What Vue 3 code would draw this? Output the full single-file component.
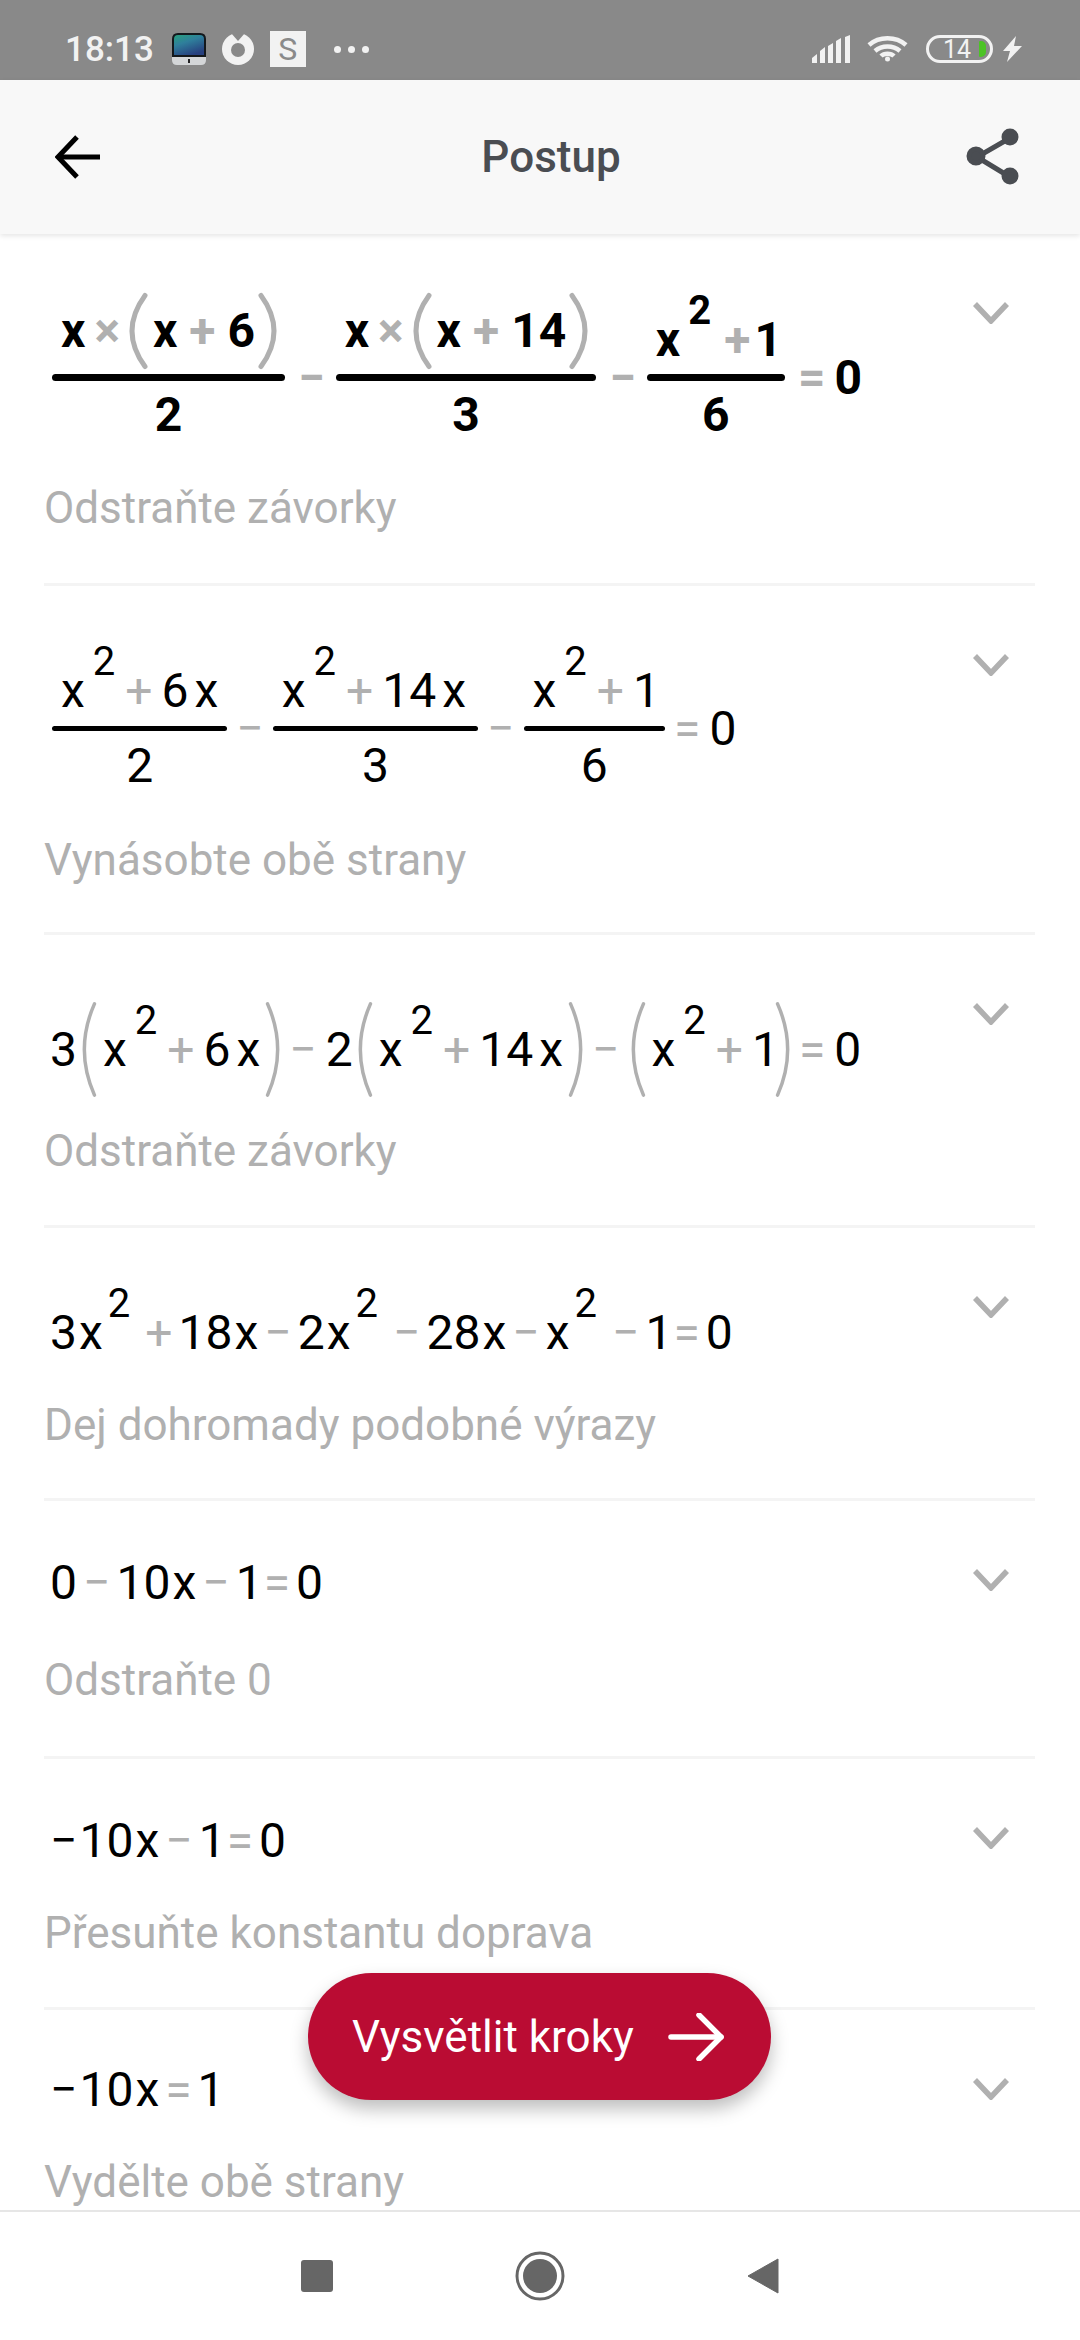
<template>
  <div class="page">
    <div class="status">
      <div class="side">
        <span class="time">18:13</span>
        <svg class="imac" width="34" height="32" viewBox="0 0 34 32">
          <defs>
            <linearGradient id="scr" x1="0" y1="0" x2="0.5" y2="1">
              <stop offset="0" stop-color="#27a37a" />
              <stop offset="0.45" stop-color="#2f7f9c" />
              <stop offset="1" stop-color="#27407f" />
            </linearGradient>
          </defs>
          <path d="M1 23V6q0-5 5-5h22q5 0 5 5v17z" fill="url(#scr)" stroke="#14181c" stroke-width="2" />
          <path d="M0 24h34v3q0 5-5 5H5q-5 0-5-5z" fill="#d4d6d8" />
          <rect x="16" y="26" width="2" height="4" fill="#222" />
        </svg>
        <svg class="logo" width="32" height="32" viewBox="0 0 32 32">
          <circle cx="16" cy="16" r="16" fill="#f2f2f2" />
          <path d="M9 0L16 8L23 0z" fill="#898989" />
          <circle cx="16" cy="17" r="7" fill="#898989" />
        </svg>
        <span class="sq">S</span>
        <span class="dots"><i></i><i></i><i></i></span>
      </div>
      <div class="side">
        <svg width="39" height="28" viewBox="0 0 39 28" fill="#f2f2f2">
          <path d="M0 23l5-4v9H0zM8 16l5-4v16H8zM16 11l5-3v20h-5zM24 6l5-3v25h-5zM33 2l5-2v28h-5z" />
        </svg>
        <svg class="wifi" width="41" height="26" viewBox="0 0 41 26" fill="none" stroke="#f2f2f2" stroke-width="4.5">
          <path d="M2 9C12 0 29 0 39 9" />
          <path d="M8 15C15 9 26 9 33 15" />
          <path d="M14 20C17 17 24 17 27 20" />
          <circle cx="20.5" cy="23" r="2.5" fill="#f2f2f2" stroke="none" />
        </svg>
        <div class="batt">
          <span>14</span>
          <i></i>
        </div>
        <svg class="bolt" width="19" height="26" viewBox="0 0 19 26" fill="#f2f2f2">
          <path d="M13 0L0 15h7L4 26L19 10h-8z" />
        </svg>
      </div>
    </div>

    <header class="head">
      <svg width="45" height="44" viewBox="0 0 45 44" fill="none" stroke="#000" stroke-width="5">
        <path d="M45 22H4" />
        <path d="M22 2L3 22L22 42" />
      </svg>
      <h1 class="title">Postup</h1>
      <svg width="54" height="58" viewBox="0 0 54 58" fill="#4a4d52" stroke="#4a4d52" stroke-width="5">
        <path d="M44 10L11 29L44 49" fill="none" />
        <circle cx="44" cy="9" r="6" />
        <circle cx="10" cy="28" r="7" />
        <circle cx="44" cy="48" r="6" />
      </svg>
    </header>

    <main class="list">
      <section v-for="(s, i) in steps" :key="i" class="step" :class="{ bold: s.bold, tight: s.tight }" :style="{ paddingBottom: s.pad[2] + 'px' }">
        <div class="body">
          <div class="math" :style="{ marginTop: s.pad[0] + 'px', marginBottom: s.pad[1] + 'px' }">
            <div v-for="(it, j) in s.items" :key="j" :class="it.den ? 'frac' : 'run'">
              <div class="num">
                <template v-for="(t, k) in it.toks" :key="k">
                  <svg v-if="t.paren" class="paren" :class="{ shut: t.shut, tall: s.tall }" viewBox="0 0 18 100" preserveAspectRatio="none">
                    <path d="M16 2Q-10 50 16 98" fill="none" vector-effect="non-scaling-stroke" />
                  </svg>
                  <span v-else :class="t.cls">{{ t.text }}</span>
                </template>
              </div>
              <template v-if="it.den">
                <div class="bar"></div>
                <div class="den">{{ it.den }}</div>
              </template>
            </div>
          </div>
          <p class="cap">{{ s.cap }}</p>
        </div>
        <svg class="chev" width="36" height="22" viewBox="0 0 36 22" fill="none" stroke="#b0b0b0" stroke-width="5.5">
          <path d="M2 2L18 19L34 2" />
        </svg>
      </section>
    </main>

    <button class="cta">
      <span>Vysvětlit kroky</span>
      <svg width="56" height="48" viewBox="0 0 56 48" fill="none" stroke="#fff" stroke-width="5.5" stroke-linecap="round" stroke-linejoin="round">
        <path d="M3 24H53" />
        <path d="M31 2L53 24L31 46" />
      </svg>
    </button>

    <nav class="nav">
      <span class="stop"></span>
      <svg width="50" height="50" viewBox="0 0 50 50">
        <circle cx="25" cy="25" r="23" fill="none" stroke="#666" stroke-width="3" />
        <circle cx="25" cy="25" r="17" fill="#666" />
      </svg>
      <svg width="32" height="36" viewBox="0 0 32 36">
        <path d="M31 1V35L1 18z" fill="#666" stroke="#666" stroke-width="1" stroke-linejoin="round" />
      </svg>
    </nav>
  </div>
</template>

<script setup>
// small token notation: "~x" sits close to the number before it, "^2" is a power, "!-" is a black minus
const glyph = { '+': '+', '-': '−', '=': '=', '*': '×' }

const parse = (str) =>
  str.split(' ').map((t) => {
    if (t === '(') return { paren: true }
    if (t === ')') return { paren: true, shut: true }
    if (t === '=') return { cls: 'op eq', text: glyph[t] }
    if (t === '*') return { cls: 'op times', text: glyph[t] }
    if (glyph[t]) return { cls: 'op', text: glyph[t] }
    if (t === '!-') return { cls: 'neg', text: '−' }
    if (t === '^2') return { cls: 'sup', text: '2' }
    if (t === '~x') return { cls: 'near', text: 'x' }
    return { cls: 'n', text: t }
  })

const fr = (n, den) => ({ toks: parse(n), den })
const ru = (n) => ({ toks: parse(n) })

const steps = [
  {
    bold: true,
    pad: [60, 19, 47],
    cap: 'Odstraňte závorky',
    items: [fr('x * ( x + 6 )', '2'), ru('-'), fr('x * ( x + 14 )', '3'), ru('-'), fr('x ^2 + 1', '6'), ru('= 0')]
  },
  {
    pad: [77, 38, 44],
    cap: 'Vynásobte obě strany',
    items: [fr('x ^2 + 6 ~x', '2'), ru('-'), fr('x ^2 + 14 ~x', '3'), ru('-'), fr('x ^2 + 1', '6'), ru('= 0')]
  },
  {
    tall: true,
    pad: [67, 26, 46],
    cap: 'Odstraňte závorky',
    items: [ru('3 ( x ^2 + 6 ~x ) - 2 ( x ^2 + 14 ~x ) - ( x ^2 + 1 ) = 0')]
  },
  {
    tight: true,
    pad: [77, 36, 45],
    cap: 'Dej dohromady podobné výrazy',
    items: [ru('3 ~x ^2 + 18 ~x - 2 ~x ^2 - 28 ~x - x ^2 - 1 = 0')]
  },
  { tight: true, pad: [54, 41, 48], cap: 'Odstraňte 0', items: [ru('0 - 10 ~x - 1 = 0')] },
  { tight: true, pad: [54, 36, 46], cap: 'Přesuňte konstantu doprava', items: [ru('!- 10 ~x - 1 = 0')] },
  { tight: true, pad: [52, 36, 47], cap: 'Vydělte obě strany', items: [ru('!- 10 ~x = 1')] }
]
</script>

<style>
html, body { margin: 0; background: #fff; }
</style>

<style scoped>
.page { position: relative; width: 1080px; height: 2340px; display: flex; flex-direction: column; overflow: hidden; font-family: Roboto, sans-serif; background: #fff; }

.status { height: 80px; flex: none; background: #898989; display: flex; align-items: center; justify-content: space-between; padding: 18px 58px 0 65px; box-sizing: border-box; }
.side { display: flex; align-items: center; }
.time { font-size: 35px; font-weight: 500; color: #f2f2f2; margin-right: 18px; }
.logo { margin-left: 16px; }
.sq { width: 36px; height: 36px; margin-left: 16px; background: #f2f2f2; color: #8a8a8a; font-size: 32px; line-height: 36px; text-align: center; }
.dots { display: flex; gap: 7px; margin-left: 28px; }
.dots i { width: 7px; height: 7px; border-radius: 50%; background: #f2f2f2; }
.wifi { margin-left: 16px; }
.batt { width: 67px; height: 28px; margin-left: 18px; border: 3px solid #f2f2f2; border-radius: 15px; box-sizing: border-box; display: flex; align-items: center; color: #f2f2f2; font-size: 25px; padding-left: 14px; position: relative; }
.batt i { position: absolute; right: 4px; top: 3px; width: 7px; height: 16px; background: #4cc326; border-radius: 1px 5px 5px 1px; }
.bolt { margin-left: 10px; }

.head { position: relative; z-index: 2; height: 154px; flex: none; background: #f8f8f8; box-shadow: 0 2px 5px rgba(0, 0, 0, 0.1); display: flex; align-items: center; padding: 0 60px 0 55px; box-sizing: border-box; }
.title { flex: 1; margin: 0; padding-left: 36px; text-align: center; font-size: 44px; font-weight: 500; color: #4a4d52; }

.list { flex: 1; min-height: 0; overflow: hidden; }
.step { display: flex; margin: 0 45px 0 44px; border-bottom: 3px solid #f4f4f4; box-sizing: border-box; }
.body { flex: 1; min-width: 0; }
.chev { flex: none; margin: 68px 26px 0 0; }
.cap { margin: 0; font-size: 44px; line-height: 56px; color: #b0b0b0; white-space: nowrap; }

.math { display: flex; align-items: center; padding-left: 8px; font-size: 48px; line-height: 56px; color: #000; }
.bold .math { font-weight: 700; }
.run { display: flex; align-items: center; }
.run:first-child { margin-left: -2px; }
.num { display: flex; align-items: center; justify-content: center; }
.frac { display: grid; grid-template-rows: 1fr auto 1fr; }
.bold .frac { margin: 0 4px 0 2px; }
.bold .frac:first-child { margin-left: 0; }
.frac .num { align-self: end; padding: 0 9px 7px 9px; }
.frac:nth-child(3) .num { padding-right: 12px; }
.frac:nth-child(5) .num { padding-right: 5px; }
.bold .frac .num { padding: 0 8px 6px 9px; }
.bold .frac:nth-child(5) .num { padding-right: 3px; }
.bar { height: 5px; background: #000; border-radius: 3px; }
.bold .bar { height: 7px; border-radius: 4px; }
.den { padding-top: 7px; text-align: center; }
.bold .den { padding-top: 6px; }

.op { color: #b0b0b0; margin: 0 9px; }
.bold .frac .op { margin: 0 12px; }
.bold .frac .times { margin: 0 9px; }
.bold .frac .sup ~ .op { margin: 0 4px 0 12px; }
.near { margin-left: 6px; }
.sup { font-size: 40px; margin: 0 1px 0 8px; transform: translateY(-29px); }

.tight .op { margin: 0 6px 0 10px; }
.tight .near + .op { margin-left: 6px; }
.tight .n + .op { margin-left: 6px; }
.tight .eq { margin: 0 6px 0 7px; }
.tight .n + .eq { margin-left: 1px; }
.tight .near { margin-left: 2px; }
.tight .sup { margin: 0 5px 0 5px; }
.neg { margin-right: 2px; }

.paren { width: 18px; height: 74px; margin: 0 6px 0 0; flex: none; overflow: visible; }
.paren.shut { margin: 0 0 0 4px; transform: scaleX(-1); }
.paren path { stroke: #b0b0b0; stroke-width: 5px; stroke-linecap: round; }
.paren.tall { height: 95px; width: 14px; margin: 0 7px 0 5px; }
.paren.tall.shut { margin: 0 0 0 6px; }
.op + .paren.tall { margin-left: 2px; }
.n + .paren.tall.shut { margin-left: -3px; }
.paren.tall path { stroke-width: 3.5px; }

.cta { position: absolute; z-index: 3; left: 308px; bottom: 240px; width: 463px; height: 127px; border: 0; border-radius: 64px; background: #ba0c33; box-shadow: 0 9px 18px rgba(0, 0, 0, 0.26); color: #fff; font-family: inherit; font-size: 44px; display: flex; align-items: center; justify-content: space-between; padding: 0 47px 0 44px; box-sizing: border-box; }

.nav { height: 130px; flex: none; position: relative; z-index: 2; background: #fff; border-top: 2px solid #e6e6e6; box-sizing: border-box; display: flex; align-items: center; justify-content: center; gap: 182px; }
.stop { width: 32px; height: 32px; background: #666; border-radius: 3px; }
</style>
